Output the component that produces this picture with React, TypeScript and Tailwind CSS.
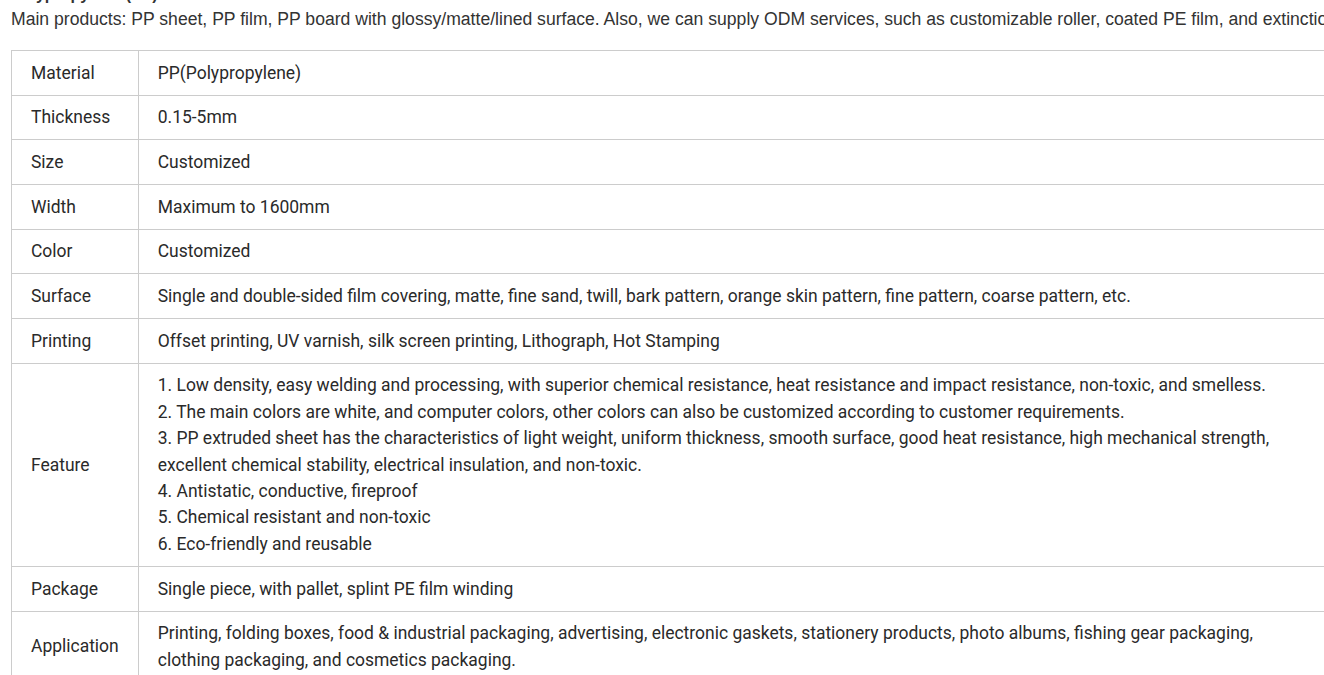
const rows: { label: string; lines: string[] }[] = [
  { label: "Material", lines: ["PP(Polypropylene)"] },
  { label: "Thickness", lines: ["0.15-5mm"] },
  { label: "Size", lines: ["Customized"] },
  { label: "Width", lines: ["Maximum to 1600mm"] },
  { label: "Color", lines: ["Customized"] },
  {
    label: "Surface",
    lines: [
      "Single and double-sided film covering, matte, fine sand, twill, bark pattern, orange skin pattern, fine pattern, coarse pattern, etc.",
    ],
  },
  {
    label: "Printing",
    lines: ["Offset printing, UV varnish, silk screen printing, Lithograph, Hot Stamping"],
  },
  {
    label: "Feature",
    lines: [
      "1. Low density, easy welding and processing, with superior chemical resistance, heat resistance and impact resistance, non-toxic, and smelless.",
      "2. The main colors are white, and computer colors, other colors can also be customized according to customer requirements.",
      "3. PP extruded sheet has the characteristics of light weight, uniform thickness, smooth surface, good heat resistance, high mechanical strength, excellent chemical stability, electrical insulation, and non-toxic.",
      "4. Antistatic, conductive, fireproof",
      "5. Chemical resistant and non-toxic",
      "6. Eco-friendly and reusable",
    ],
  },
  { label: "Package", lines: ["Single piece, with pallet, splint PE film winding"] },
  {
    label: "Application",
    lines: [
      "Printing, folding boxes, food & industrial packaging, advertising, electronic gaskets, stationery products, photo albums, fishing gear packaging, clothing packaging, and cosmetics packaging.",
    ],
  },
];

export default function App() {
  return (
    <div className="w-[1324px] h-[675px] overflow-hidden bg-white">
      <div className="w-[1500px] pl-[11px] -mt-[15px] text-[#333]">
        <h3 className="text-[16px] leading-[20px] font-bold font-['Liberation_Sans',Arial,sans-serif] whitespace-nowrap">
          Polypropylene (PP)
        </h3>
        <p className="mt-[1px] text-[17.6px] leading-[26.4px] font-['Liberation_Sans',Arial,sans-serif] whitespace-nowrap mb-[17.6px]">
          Main products: PP sheet, PP film, PP board with glossy/matte/lined surface. Also, we can supply ODM services, such as customizable roller, coated PE film, and extinction film.
        </p>

        <table className="w-[1317px] border-collapse text-[17.48px] leading-[26.4px] font-['Roboto',sans-serif] text-[#2a2a2a]">
          <tbody>
            {rows.map((r) => (
              <tr key={r.label}>
                <td className="w-[123px] border border-[#ccc] px-[19px] py-[8.65px] align-middle">{r.label}</td>
                <td className="border border-[#ccc] px-[19px] py-[8.65px]">
                  {r.lines.map((l, i) => (
                    <div key={i}>{l}</div>
                  ))}
                </td>
              </tr>
            ))}
          </tbody>
        </table>
      </div>
    </div>
  );
}
